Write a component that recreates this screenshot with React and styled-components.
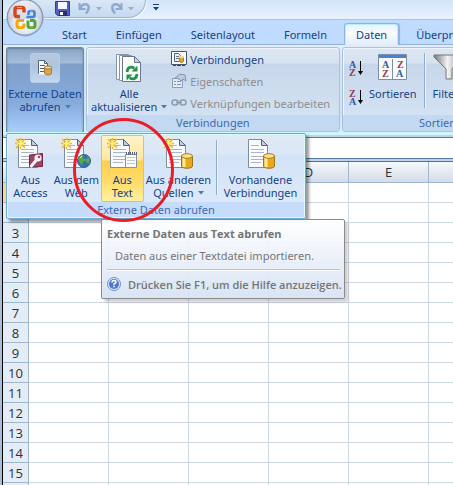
import React from "react";
import styled, { createGlobalStyle, css } from "styled-components";

const Global = createGlobalStyle`
  * { box-sizing: border-box; }
  body { margin: 0; overflow: hidden; background: #fff; }
  button, input { font: inherit; color: inherit; }
  svg { flex: none; }
`;

const ink = "#15428b";

const Window = styled.div`
  position: relative;
  height: 100vh;
  overflow: hidden;
  border-left: 1px solid #000;
  margin-left: 2px;
  font-family: "Noto Sans", "Open Sans", sans-serif;
  font-size: 11px;
  line-height: 13px;
  color: ${ink};
  background: #fff;
`;

const Desktop = styled.div`
  background: #a9bdd6;
`;

const TitleBar = styled.header`
  display: flex;
  align-items: flex-start;
  height: 20px;
  padding-left: 34px;
  background: linear-gradient(#d3e5fa, #dfecfb 60%, #e8f2fd);
  border-bottom: 1px solid #9dc9ee;
`;

const QuickBar = styled.div`
  display: flex;
  align-items: center;
  height: 18px;
  width: 109px;
  padding-left: 18px;
  border: solid #9db6d6;
  border-width: 0 1px 1px 0;
  border-radius: 0 0 18px 0;
  background: linear-gradient(#d9e7f8, #c6d9f0);
  box-shadow: 1px 1px 0 #f4f9ff;
`;

const QuickButton = styled.button`
  display: flex;
  align-items: center;
  gap: ${(p) => p.$gap || 0}px;
  margin: 0 ${(p) => p.$after || 0}px 0 0;
  padding: 0;
  border: 0;
  background: none;
`;

const Orb = styled.button`
  position: absolute;
  z-index: 3;
  left: 2px;
  top: -2px;
  padding: 0;
  border: 0;
  background: none;
  line-height: 0;
`;

const Tabs = styled.nav`
  display: flex;
  align-items: flex-end;
  height: 25px;
  padding-left: 47px;
  gap: 5px;
  background: #bfdbff;
  border-bottom: 1px solid #8db2e3;
`;

const Tab = styled.button`
  flex: none;
  height: 22px;
  margin-bottom: -1px;
  padding: 0 11px;
  border: 1px solid transparent;
  border-bottom: 0;
  border-radius: 4px 4px 0 0;
  background: none;
  ${(p) =>
    p.$active &&
    css`
      border-color: #8db2e3;
      background: linear-gradient(#e9f2fd, #f7fbff 45%, #e3eefb);
      box-shadow: inset 1px 1px 0 #b8effa, inset -1px 0 0 #b8effa, 1px 0 1px #78bde0;
    `}
`;

const Ribbon = styled.section`
  display: flex;
  gap: 2px;
  height: 90px;
  padding: 2px 0 3px 3px;
  background: linear-gradient(#e5effb, #d4e4f6 20%, #cfe3f8 80%, #cffaff);
`;

const Group = styled.section`
  display: flex;
  flex-direction: column;
  flex: ${(p) => (p.$grow ? "1 0 auto" : "none")};
  width: ${(p) => (p.$width ? p.$width + "px" : "auto")};
  border: 1px solid #a9c3df;
  border-radius: 3px;
  background: linear-gradient(#dde7f3, #d6e2f0 15px, #c7d6e9 16px, #d7e6f5);
  box-shadow: inset 1px 1px 0 #edf4fc;
  overflow: hidden;
`;

const GroupBody = styled.div`
  display: flex;
  flex: 1;
  padding: 0 4px;
`;

const GroupTitle = styled.h2`
  margin: 0;
  height: 16px;
  padding-left: ${(p) => p.$indent || 0}px;
  font-size: 11px;
  font-weight: 400;
  line-height: 16px;
  color: #3e6aaa;
  background: #c2d9f1;
  white-space: nowrap;
`;

const OpenMenuButton = styled.button`
  display: flex;
  flex: none;
  flex-direction: column;
  align-items: center;
  gap: 4px;
  width: 78px;
  padding: 5px 0 0;
  border: 1px solid #74879f;
  border-bottom: 0;
  border-radius: 3px 3px 0 0;
  background: linear-gradient(#8ba5c8, #a5bddb 15px, #7f9fc9 16px, #86abdc 55px, #a9cffb);
  box-shadow: inset 0 1px 2px #687d99;
`;

const IconFrame = styled.span`
  display: flex;
  align-items: center;
  justify-content: center;
  width: 30px;
  height: 30px;
  border: 1px solid #b9cce3;
  border-radius: 3px;
  background: linear-gradient(#b9cadf, #aec4df 45%, #c4d8f0);
`;

const BigButton = styled.button`
  display: flex;
  flex: none;
  flex-direction: column;
  align-items: center;
  gap: 3px;
  padding: 6px 0 0;
  border: 0;
  background: none;
`;

const Label = styled.span`
  white-space: nowrap;
`;

const Stack = styled.div`
  display: flex;
  flex-direction: column;
  gap: 6px;
  padding: ${(p) => p.$top || 0}px 0 0 ${(p) => p.$left || 0}px;
`;

const SmallButton = styled.button`
  display: flex;
  align-items: center;
  gap: 3px;
  height: 16px;
  padding: 0;
  border: 0;
  background: none;
  white-space: nowrap;
  color: ${(p) => (p.disabled ? "#8d8d8d" : ink)};
`;

const SortButton = styled.button`
  height: 23px;
  padding: 0;
  border: 0;
  background: none;
`;

const Divider = styled.span`
  flex: none;
  width: 2px;
  height: ${(p) => p.$height}px;
  margin: ${(p) => p.$margin};
  border-left: 1px solid #8daed3;
  border-right: 1px solid #eaf3fd;
`;

const FormulaBar = styled.div`
  height: 27px;
  padding: 2px 0 4px;
  background: #bfd3ea;
  border-bottom: 1px solid #4d6fa3;
`;

const FormulaInput = styled.input`
  display: block;
  width: 100%;
  height: 22px;
  padding: 0 8px;
  border: solid #5578a9;
  border-width: 1px 0;
  background: #fff;
  outline: none;
`;

const Sheet = styled.table`
  width: 100%;
  table-layout: fixed;
  border-collapse: separate;
  border-spacing: 0;
  font-family: "Open Sans", "Noto Sans", sans-serif;
  font-size: 13px;
  line-height: 18px;
  color: #263238;
`;

const HeadCol = styled.col`
  width: 26px;
`;
const DataCol = styled.col`
  width: 80px;
`;

const ColumnHead = styled.th`
  height: 21px;
  padding: 0;
  font-weight: 400;
  border: solid #9eb6ce;
  border-width: 0 1px 1px 0;
  background: linear-gradient(#f6f9fc, #d3dbe9);
`;

const RowHead = styled.th`
  height: 20px;
  padding: 0;
  font-weight: 400;
  border: solid #9eb6ce;
  border-width: 0 1px 1px 0;
  background: ${(p) => (p.$selected ? "#ffd58d" : "#e4ecf7")};
`;

const Cell = styled.td`
  height: 20px;
  padding: 0;
  border: solid #d0d7e5;
  border-width: 0 1px 1px 0;
`;

const Menu = styled.div`
  position: absolute;
  z-index: 4;
  left: 3px;
  top: 133px;
  width: 300px;
  border: 1px solid #6da9d5;
  border-radius: 2px;
  background: linear-gradient(#e1eaf6, #dce7f5 20px, #d3e3f7 22px, #dfebfb);
  box-shadow: inset 0 0 0 1px #d9fbff, 3px 3px 3px #00000066;
`;

const MenuItems = styled.div`
  display: flex;
  height: 68px;
  padding: 1px 4px 0 2px;
`;

const MenuItem = styled.button`
  display: flex;
  flex: ${(p) => p.$share} 1 0;
  min-width: 0;
  flex-direction: column;
  align-items: center;
  height: 67px;
  gap: 3px;
  padding: 2px 0 0;
  border: 1px solid ${(p) => (p.$hot ? "#d9c17a" : "transparent")};
  border-radius: 2px;
  background: ${(p) =>
    p.$hot
      ? "linear-gradient(#fff3cb, #ffe69b 24px, #ffd04c 25px, #ffdc68 70%, #fff1a0)"
      : "none"};
`;

const MenuTitle = styled.h3`
  margin: 0 1px 1px;
  height: 15px;
  font-size: 11px;
  font-weight: 400;
  line-height: 15px;
  text-align: center;
  color: #3f69b0;
  background: #c5dcfd;
`;

const Tip = styled.aside`
  position: absolute;
  z-index: 5;
  left: 98px;
  top: 219px;
  width: 244px;
  padding: 7px 4px 7px 5px;
  border: 1px solid #8b8b8b;
  border-radius: 2px;
  background: linear-gradient(#fffffff0, #d5e1f3e8);
  box-shadow: 3px 3px 3px #00000030;
  color: #757575;
  white-space: nowrap;
`;

const TipTitle = styled.h4`
  margin: 0;
  font-size: 11px;
  font-family: "Open Sans", "Noto Sans", sans-serif;
  font-weight: 700;
  line-height: 13px;
`;

const TipText = styled.p`
  margin: 0;
  padding: 8px 8px 5px;
  line-height: 16px;
  border-bottom: 1px solid #a9c4e4;
  box-shadow: 0 1px 0 #fff;
`;

const TipHelp = styled.p`
  display: flex;
  align-items: center;
  gap: 7px;
  margin: 0;
  padding-top: 7px;
  font-family: "Open Sans", "Noto Sans", sans-serif;
  font-weight: 600;
`;

const Marker = styled.svg`
  position: absolute;
  z-index: 6;
  left: 70px;
  top: 118px;
  pointer-events: none;
`;

const Caret = ({ fill = "#4a7ab5" }) => (
  <svg width="6" height="4" viewBox="0 0 6 4">
    <path d="M0 0h6L3 3.6z" fill={fill} />
  </svg>
);

const CaretSpace = styled.span`
  display: inline-flex;
  margin-left: 4px;
  vertical-align: 2px;
`;

const Drop = () => (
  <CaretSpace>
    <Caret />
  </CaretSpace>
);

const OfficeLogo = () => (
  <svg width="40" height="40" viewBox="0 0 40 40">
    <defs>
      <radialGradient id="orb" cx="50%" cy="62%" r="55%">
        <stop offset="0" stopColor="#fff" />
        <stop offset=".6" stopColor="#e2e7ef" />
        <stop offset="1" stopColor="#aab6c9" />
      </radialGradient>
      <linearGradient id="orbTop" x1="0" y1="0" x2="0" y2="1">
        <stop offset="0" stopColor="#fff" />
        <stop offset="1" stopColor="#c6cfdd" />
      </linearGradient>
    </defs>
    <circle cx="20" cy="20" r="18.5" fill="#6e86aa" opacity=".5" />
    <circle cx="20" cy="19.3" r="17.8" fill="url(#orb)" stroke="#8193ae" />
    <path d="M3.5 19A16.5 16.5 0 0 1 36.5 19Q20 24 3.5 19z" fill="url(#orbTop)" opacity=".75" />
    <g fill="none" strokeWidth="3.4">
      <path d="M15 18.5h-3a2 2 0 0 1-2-2v-5a2 2 0 0 1 2-2h5a2 2 0 0 1 2 2v3" stroke="#d9441c" />
      <path d="M21.5 19h6a2 2 0 0 0 2-2v-2a2 2 0 0 0-2-2h-2a2 2 0 0 0-2 2v2" stroke="#3c86d2" strokeWidth="2.6" />
      <path d="M19 22.5h-5a2 2 0 0 0-2 2v3a2 2 0 0 0 2 2h3a2 2 0 0 0 2-2v-2" stroke="#f2a70d" strokeWidth="3" />
      <path d="M25 22.5h3a2 2 0 0 1 2 2v3a2 2 0 0 1-2 2h-3a2 2 0 0 1-2-2v-5" stroke="#58a23b" strokeWidth="3" />
    </g>
    <path d="M12 9.5h5M14 29h3M25 29h3M25 13h3" stroke="#fff" opacity=".45" />
  </svg>
);

const SaveIcon = () => (
  <svg width="15" height="15" viewBox="0 0 15 15">
    <path d="M.5.5h14v14h-12l-2-2z" fill="#5060bc" stroke="#343f91" />
    <path d="M3 1h9v7H3z" fill="#f4f7ff" />
    <path d="M4 10h8v5H4z" fill="#27306c" />
    <path d="M5 11h3v3H5z" fill="#fff" />
  </svg>
);

const UndoIcon = ({ flip }) => (
  <svg width="13" height="13" viewBox="0 0 13 13">
    <g transform={flip ? "matrix(-1 0 0 1 13 0)" : undefined} fill="none" stroke="#8ea9cf">
      <path d="M1.5 1v6h6" strokeWidth="2" />
      <path d="M2 6Q5 1 9 2.5Q13 5 8 11.5" strokeWidth="2.5" />
    </g>
  </svg>
);

const MoreIcon = () => (
  <svg width="6" height="7" viewBox="0 0 6 7">
    <path d="M0 .5h6" stroke={ink} />
    <path d="M0 3h6L3 6.5z" fill={ink} />
  </svg>
);

const Page = ({ x = 0, y = 0 }) => (
  <g transform={`translate(${x} ${y})`}>
    <path d="M.5.5h13l6 6v22H.5z" fill="#fafcff" stroke="#7e8ca3" />
    <path d="M13.5.5v6h6z" fill="#c0cfe5" stroke="#52647f" />
    <path d="M3 6.5h8M3 10.5h13M3 13.5h13M3 17.5h13M3 20.5h13M3 23.5h10" stroke="#a9b5c8" />
  </g>
);

const Spark = () => (
  <g>
    <path d="M5.5 0v11M0 5.5h11M1 1l9 9M10 1l-9 9" stroke="#f2b916" strokeWidth="1.5" />
    <path d="M5.5 1.5l1 3 3 1-3 1-1 3-1-3-3-1 3-1z" fill="#fff386" />
  </g>
);

const Cylinder = () => (
  <g transform="translate(15 14)">
    <path d="M.5 3v10c0 3 11 3 11 0V3z" fill="#e9a91b" stroke="#9c741d" />
    <path d="M3 5v9" stroke="#ffe99c" strokeWidth="3" />
    <ellipse cx="6" cy="3" rx="5.5" ry="2.3" fill="#ffe082" stroke="#a77c24" />
  </g>
);

const SourceIcon = ({ kind, isNew = true }) => (
  <svg width="32" height="32" viewBox="0 0 32 32">
    <Page x={4} y={1} />
    {isNew && (
      <g transform="translate(1 0)">
        <Spark />
      </g>
    )}
    {kind === "database" && (
      <g transform="translate(4 1)">
        <Cylinder />
      </g>
    )}
    {kind === "access" && (
      <g>
        <path d="M15.5 17l13-1.5v13l-13 .5z" fill="#9c4462" stroke="#732744" />
        <circle cx="24" cy="20" r="3.6" fill="#f8eff2" />
        <path d="M22.5 22l-6 7" stroke="#f8eff2" strokeWidth="3" />
        <circle cx="25" cy="19" r="1.2" fill="#9c4462" />
      </g>
    )}
    {kind === "web" && (
      <g>
        <circle cx="24" cy="23" r="6.5" fill="#326fbd" stroke="#355c8f" />
        <path d="M18 21q1-4 6-4l-1 3 3 2-3 2-1 4-2-3zM26 17l4 4-1 5-3-2-1-3 3-1z" fill="#5ba54a" />
        <path d="M20 20l2-2" stroke="#d9f5e7" />
      </g>
    )}
    {kind === "text" && (
      <g>
        <path d="M19.5 16.5h11v13h-11z" fill="#fff" stroke="#8292a6" />
        <path d="M20 15.5h11" stroke="#54657f" strokeWidth="3" strokeDasharray="1 1" />
        <path d="M21 19.5h8M21 22.5h8M21 25.5h8" stroke="#bdc8d6" />
      </g>
    )}
  </svg>
);

const SmallDataIcon = () => (
  <svg width="16" height="16" viewBox="0 0 16 16">
    <path d="M1 .5h7l3 3v11H1z" fill="#f8fbff" />
    <path d="M1.5 14V.5h6l3 3v3M7.5.5v3h3M3 5.5h5M3 8.5h5M3 11.5h5" fill="none" stroke="#53657f" />
    <path d="M7.5 7v6c0 2.5 7 2.5 7 0V7z" fill="#dba650" stroke="#a47938" />
    <ellipse cx="11" cy="7.5" rx="3.5" ry="1.5" fill="#ffd88a" stroke="#a47938" />
  </svg>
);

const RefreshIcon = () => (
  <svg width="28" height="30" viewBox="0 0 28 30">
    <path d="M1.5.5h12l5 5v20h-17z" fill="#f8fbff" stroke="#8793a6" />
    <path d="M4.5 1.5h12l5 5v20h-17z" fill="#f8fbff" stroke="#8793a6" />
    <path d="M7.5 2.5h12l6 6v19h-18z" fill="#fff" stroke="#69778d" />
    <path d="M19.5 2.5v6h6z" fill="#c1d1e5" stroke="#69778d" />
    <g fill="none" stroke="#229447" strokeWidth="2.8">
      <path d="M12 18q1-7 7.5-4" />
      <path d="M22 20q-1 7-7.5 4" />
    </g>
    <path d="M16.5 17.5h6v-6zM17.5 20.5h-6v6z" fill="#229447" />
  </svg>
);

const ConnectionsIcon = () => (
  <svg width="16" height="16" viewBox="0 0 16 16">
    <path d="M.5.5h15v13H.5z" fill="#fbfdff" stroke="#46566e" />
    <path d="M3.5 2.5h4l2 2v6h-6z" fill="#e9eef6" stroke="#52657e" />
    <path d="M5 5.5h3M5 7.5h3" stroke="#64748b" />
    <path d="M8.5 6v4c0 2 4 2 4 0V6z" fill="#e2a23b" stroke="#b9802c" />
    <ellipse cx="10.5" cy="6" rx="2.5" ry="1.2" fill="#ffd780" />
    <path d="M2 14.5h3M6 14.5h4M11 14.5h3" stroke="#33435b" />
  </svg>
);

const PropertiesIcon = () => (
  <svg width="16" height="16" viewBox="0 0 16 16">
    <path d="M1.5 5.5h10v9h-10z" fill="#e4eaf3" stroke="#8e9eb4" />
    <path d="M3 8.5h2M6 8.5h4M3 11.5h2M6 11.5h4" stroke="#8293aa" />
    <path d="M4 5l5-4 5 1 1 6-3-2-2 2-2-2z" fill="#bdc9da" stroke="#8394aa" />
  </svg>
);

const LinksIcon = () => (
  <svg width="16" height="16" viewBox="0 0 16 16">
    <g fill="none" stroke="#8c9bb0" strokeWidth="1.5">
      <rect x="1" y="5" width="6" height="5" rx="2.5" />
      <rect x="9" y="5" width="6" height="5" rx="2.5" />
      <path d="M5 7.5h6" />
    </g>
  </svg>
);

const Letter = styled.text`
  font-family: "Liberation Serif", serif;
  font-size: 10px;
  font-weight: 700;
`;
const LetterA = ({ x, y }) => (
  <Letter x={x} y={y} fill="#3458a2">A</Letter>
);
const LetterZ = ({ x, y }) => (
  <Letter x={x} y={y} fill="#963944">Z</Letter>
);

const OrderIcon = ({ descending }) => (
  <svg width="16" height="17" viewBox="0 0 16 17">
    <LetterA x={1} y={descending ? 16 : 8} />
    <LetterZ x={1} y={descending ? 8 : 16} />
    <path d="M12.5 1v13" stroke="#000" />
    <path d="M10 11h5l-2.5 4z" fill="#000" />
  </svg>
);

const SortIcon = () => (
  <svg width="30" height="30" viewBox="0 0 30 30">
    <path d="M.5.5h28v25H.5z" fill="#fbfdff" stroke="#7d8ea9" />
    <path d="M1 1h27v3H1z" fill="#4c7fd8" />
    <path d="M14.5 5v20" stroke="#7d8ea9" />
    <LetterA x={4} y={14} />
    <LetterZ x={4} y={23} />
    <LetterZ x={19} y={14} />
    <LetterA x={18} y={23} />
  </svg>
);

const FilterIcon = () => (
  <svg width="32" height="30" viewBox="0 0 32 30">
    <defs>
      <linearGradient id="funnel">
        <stop offset="0" stopColor="#777" />
        <stop offset=".45" stopColor="#f4f4f4" />
        <stop offset="1" stopColor="#777" />
      </linearGradient>
    </defs>
    <path d="M1 1h30v2L19 15v10h-6V15L1 3z" fill="url(#funnel)" stroke="#777" />
  </svg>
);

const HelpIcon = () => (
  <svg width="14" height="14" viewBox="0 0 14 14">
    <circle cx="7" cy="7" r="6.5" fill="#d9e7fc" stroke="#7491c2" />
    <circle cx="7" cy="7" r="5" fill="#4c78cf" />
    <path d="M5 5.5q0-2 2-2t2 1.5q0 1-2 2v1" fill="none" stroke="#fff" strokeWidth="1.5" />
    <path d="M6.2 9.5h1.6" stroke="#fff" strokeWidth="1.5" />
  </svg>
);

const tabs = ["Start", "Einfügen", "Seitenlayout", "Formeln", "Daten", "Überprüfen"];
const columns = ["A", "B", "C", "D", "E", "F"];
const rows = Array.from({ length: 16 }, (_, i) => i + 1);

export default function App() {
  return (
    <Desktop>
      <Global />
      <Window>
        <Orb aria-label="Office">
          <OfficeLogo />
        </Orb>
        <TitleBar>
          <QuickBar>
            <QuickButton aria-label="Speichern" $after={8}>
              <SaveIcon />
            </QuickButton>
            <QuickButton aria-label="Rückgängig" $gap={5} $after={8}>
              <UndoIcon />
              <Caret fill="#a9adb3" />
            </QuickButton>
            <QuickButton aria-label="Wiederholen" $gap={5}>
              <UndoIcon flip />
              <Caret fill="#a9adb3" />
            </QuickButton>
          </QuickBar>
          <Stack $top={4} $left={7}>
            <QuickButton aria-label="Symbolleiste anpassen">
              <MoreIcon />
            </QuickButton>
          </Stack>
        </TitleBar>

        <Tabs>
          {tabs.map((name) => (
            <Tab key={name} $active={name === "Daten"}>
              {name}
            </Tab>
          ))}
        </Tabs>

        <Ribbon>
          <OpenMenuButton aria-expanded="true">
            <IconFrame>
              <SmallDataIcon />
            </IconFrame>
            <Label>
              Externe Daten
              <br />
              abrufen
              <Drop />
            </Label>
          </OpenMenuButton>

          <Group $width={254}>
            <GroupBody>
              <BigButton>
                <RefreshIcon />
                <Label>
                  Alle
                  <br />
                  aktualisieren
                  <Drop />
                </Label>
              </BigButton>
              <Stack $top={3} $left={4}>
                <SmallButton>
                  <ConnectionsIcon />
                  Verbindungen
                </SmallButton>
                <SmallButton disabled>
                  <PropertiesIcon />
                  Eigenschaften
                </SmallButton>
                <SmallButton disabled>
                  <LinksIcon />
                  Verknüpfungen bearbeiten
                </SmallButton>
              </Stack>
            </GroupBody>
            <GroupTitle $indent={89}>Verbindungen</GroupTitle>
          </Group>

          <Group $grow>
            <GroupBody>
              <Stack $top={10} $left={1}>
                <SortButton aria-label="Aufsteigend sortieren">
                  <OrderIcon />
                </SortButton>
                <SortButton aria-label="Absteigend sortieren">
                  <OrderIcon descending />
                </SortButton>
              </Stack>
              <Stack $left={5}>
                <BigButton>
                  <SortIcon />
                  <Label>Sortieren</Label>
                </BigButton>
              </Stack>
              <Divider $height={55} $margin="5px 7px 0 7px" />
              <BigButton>
                <FilterIcon />
                <Label>Filtern</Label>
              </BigButton>
            </GroupBody>
            <GroupTitle $indent={76}>Sortieren und Filtern</GroupTitle>
          </Group>
        </Ribbon>

        <FormulaBar>
          <FormulaInput aria-label="Bearbeitungsleiste" />
        </FormulaBar>

        <Sheet>
          <colgroup>
            <HeadCol />
            {columns.map((c) => (
              <DataCol key={c} />
            ))}
          </colgroup>
          <thead>
            <tr>
              <ColumnHead aria-label="Alles auswählen" />
              {columns.map((c) => (
                <ColumnHead key={c} scope="col">
                  {c}
                </ColumnHead>
              ))}
            </tr>
          </thead>
          <tbody>
            {rows.map((r) => (
              <tr key={r}>
                <RowHead scope="row" $selected={r === 1}>
                  {r}
                </RowHead>
                {columns.map((c) => (
                  <Cell key={c} />
                ))}
              </tr>
            ))}
          </tbody>
        </Sheet>

        <Menu>
          <MenuItems>
            <MenuItem $share={42}>
              <SourceIcon kind="access" />
              <Label>
                Aus
                <br />
                Access
              </Label>
            </MenuItem>
            <MenuItem $share={48}>
              <SourceIcon kind="web" />
              <Label>
                Aus dem
                <br />
                Web
              </Label>
            </MenuItem>
            <MenuItem $share={42} $hot>
              <SourceIcon kind="text" />
              <Label>
                Aus
                <br />
                Text
              </Label>
            </MenuItem>
            <MenuItem $share={69}>
              <SourceIcon kind="database" />
              <Label>
                Aus anderen
                <br />
                Quellen
                <Drop />
              </Label>
            </MenuItem>
            <Divider $height={55} $margin="5px 2px 0 3px" />
            <MenuItem $share={81}>
              <SourceIcon kind="database" isNew={false} />
              <Label>
                Vorhandene
                <br />
                Verbindungen
              </Label>
            </MenuItem>
          </MenuItems>
          <MenuTitle>Externe Daten abrufen</MenuTitle>
        </Menu>

        <Tip role="tooltip">
          <TipTitle>Externe Daten aus Text abrufen</TipTitle>
          <TipText>Daten aus einer Textdatei importieren.</TipText>
          <TipHelp>
            <HelpIcon />
            Drücken Sie F1, um die Hilfe anzuzeigen.
          </TipHelp>
        </Tip>

        <Marker width="102" height="104" viewBox="0 0 102 104">
          <ellipse cx="50.5" cy="52" rx="49" ry="50.5" fill="none" stroke="#ed1c24" strokeWidth="3" />
        </Marker>
      </Window>
    </Desktop>
  );
}
